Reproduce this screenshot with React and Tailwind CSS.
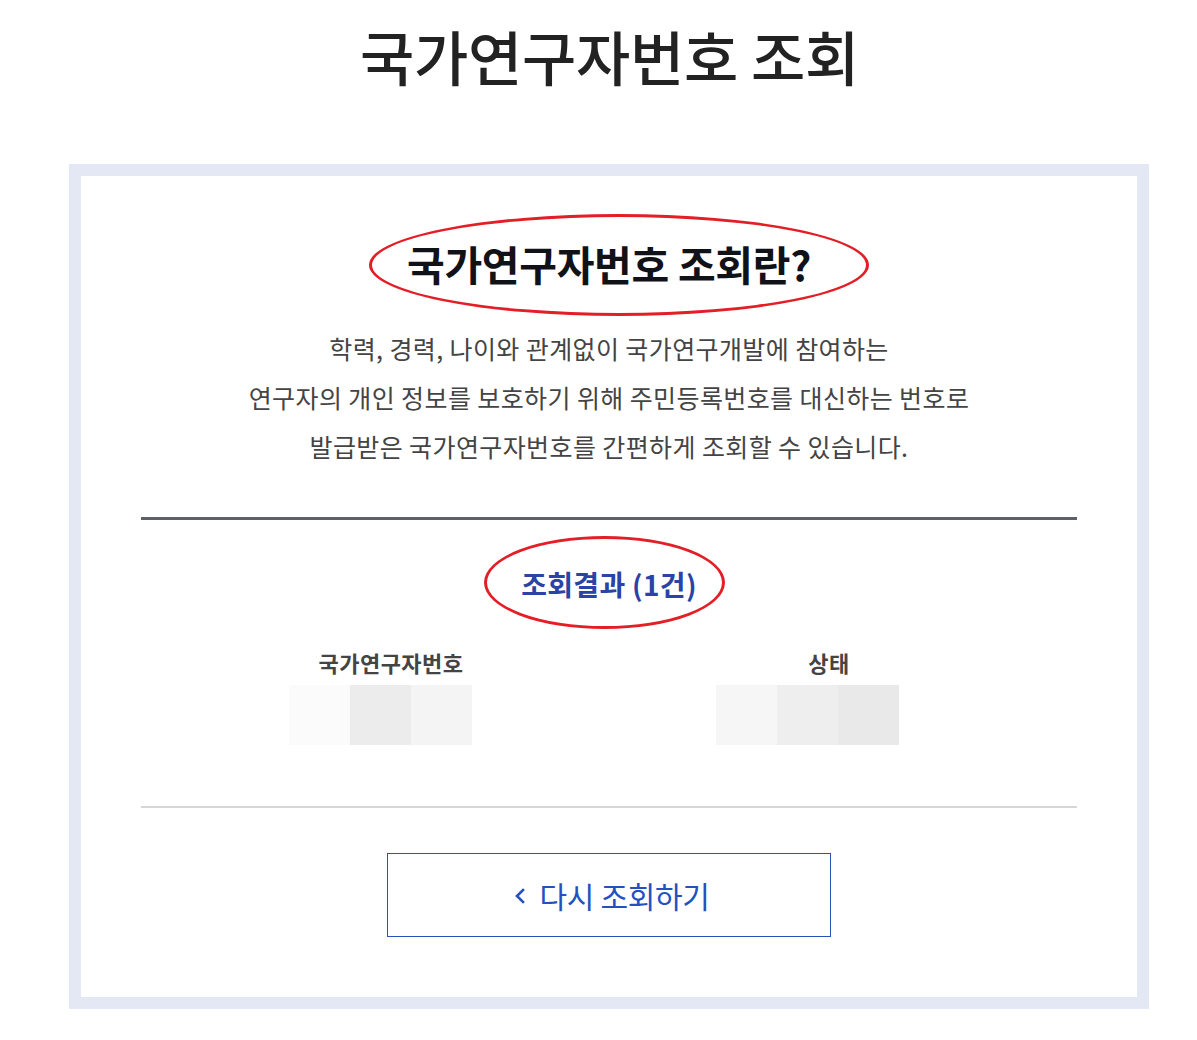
import React from "react";

const font = { fontFamily: '"Noto Sans CJK KR", "Noto Sans", sans-serif' };

export default function App() {
  return (
    <div className="w-[1197px] h-[1040px] bg-white overflow-hidden" style={font}>
      <h1 className="pt-[16px] pl-[22px] text-center text-[59px] leading-[80px] font-medium text-[#222222] tracking-[-0.3px]">
        국가연구자번호 조회
      </h1>
      <div className="mt-[68px] ml-[69px] w-[1080px] border-[12px] border-[#e4e8f5] bg-white">
        <div className="px-[60px] pt-[63px] pb-[60px] flex flex-col">
          <div className="relative flex justify-center">
            <h2 className="text-[41px] leading-[48px] font-bold text-[#111118] tracking-[-0.3px]">
              국가연구자번호 조회란?
            </h2>
            <div className="absolute left-[228px] top-[-25px] w-[500px] h-[102px] rounded-[50%] border-[3px] border-[#e41e26]" />
          </div>
          <p className="mt-[37px] text-center text-[25px] leading-[49px] text-[#444444] tracking-[0.4px]">
            학력, 경력, 나이와 관계없이 국가연구개발에 참여하는
            <br />
            연구자의 개인 정보를 보호하기 위해 주민등록번호를 대신하는 번호로
            <br />
            발급받은 국가연구자번호를 간편하게 조회할 수 있습니다.
          </p>
          <div className="mt-[46px] h-[3px] bg-[#5b6168]" />
          <div className="relative mt-[44px] flex justify-center">
            <h3 className="text-[28px] leading-[40px] font-bold text-[#2a43a6] tracking-[0.3px]">
              조회결과 (1건)
            </h3>
            <div className="absolute left-[343px] top-[-28px] w-[241px] h-[93px] rounded-[50%] border-[3px] border-[#e41e26]" />
          </div>
          <div className="mt-[43px] flex">
            <div className="ml-[150px] w-[200px] text-center text-[22px] leading-[30px] font-bold text-[#444444] tracking-[0.5px]">
              국가연구자번호
            </div>
            <div className="ml-[238px] w-[200px] text-center text-[22px] leading-[30px] font-bold text-[#444444] tracking-[0.5px]">
              상태
            </div>
          </div>
          <div className="mt-[8px] flex">
            <div className="ml-[148px] flex h-[60px]">
              <div className="w-[61px] bg-[#fbfbfb]" />
              <div className="w-[61px] bg-[#ececec]" />
              <div className="w-[61px] bg-[#f4f4f4]" />
            </div>
            <div className="ml-[244px] flex h-[60px]">
              <div className="w-[61px] bg-[#f6f6f6]" />
              <div className="w-[61px] bg-[#eeeeee]" />
              <div className="w-[61px] bg-[#e9e9e9]" />
            </div>
          </div>
          <div className="mt-[61px] h-[2px] bg-[#d6d6d6]" />
          <div className="mt-[45px] flex justify-center">
            <button className="w-[444px] h-[84px] pl-[6px] border border-[#2a52be] bg-white flex items-center justify-center gap-[13px] text-[30px] text-[#2450c0] tracking-[-0.3px]" style={font}>
              <svg width="12" height="18" viewBox="0 0 12 18" fill="none" className="mt-[2px]">
                <path d="M9 3 L3 9 L9 15" stroke="#2450c0" strokeWidth="2.6" strokeLinecap="square" />
              </svg>
              <span>다시 조회하기</span>
            </button>
          </div>
        </div>
      </div>
    </div>
  );
}
